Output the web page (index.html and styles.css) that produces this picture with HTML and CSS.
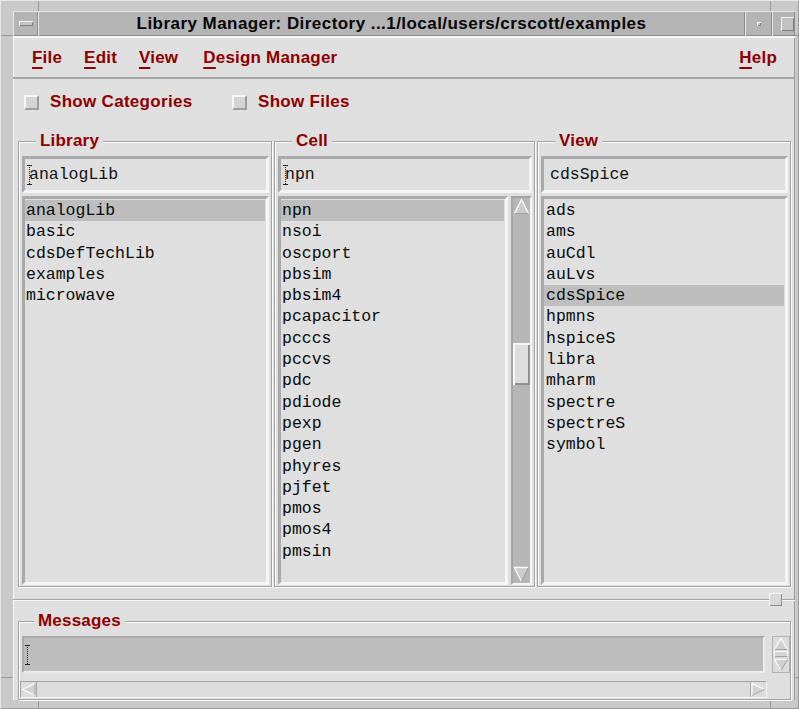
FILE: index.html
```html
<!DOCTYPE html>
<html>
<head>
<meta charset="utf-8">
<title>Library Manager</title>
<link rel="stylesheet" href="styles.css">
</head>
<body>
<div class="wm">
  <div class="titlebar">
    <div class="wm-btn wm-menu"><span class="wm-bar"></span></div>
    <div class="wm-title">Library Manager: Directory ...1/local/users/crscott/examples</div>
    <div class="wm-btn wm-min"><span class="wm-dot"></span></div>
    <div class="wm-btn wm-max"><span class="wm-square"></span></div>
  </div>

  <div class="client">
    <nav class="menubar">
      <span class="menu"><u>F</u>ile</span>
      <span class="menu"><u>E</u>dit</span>
      <span class="menu menu-view"><u>V</u>iew</span>
      <span class="menu"><u>D</u>esign Manager</span>
      <span class="menu help"><u>H</u>elp</span>
    </nav>

    <div class="options">
      <label class="toggle"><span class="check"></span>Show Categories</label>
      <label class="toggle"><span class="check"></span>Show Files</label>
    </div>

    <div class="browser">
      <fieldset class="group">
        <legend>Library</legend>
        <div class="field"><span class="ibeam"></span>analogLib</div>
        <div class="list-row">
          <div class="listbox">
            <ul class="items">
              <li class="sel">analogLib</li>
              <li>basic</li>
              <li>cdsDefTechLib</li>
              <li>examples</li>
              <li>microwave</li>
            </ul>
          </div>
        </div>
      </fieldset>

      <fieldset class="group">
        <legend>Cell</legend>
        <div class="field"><span class="ibeam"></span>npn</div>
        <div class="list-row">
          <div class="listbox">
            <ul class="items">
              <li class="sel">npn</li>
              <li>nsoi</li>
              <li>oscport</li>
              <li>pbsim</li>
              <li>pbsim4</li>
              <li>pcapacitor</li>
              <li>pcccs</li>
              <li>pccvs</li>
              <li>pdc</li>
              <li>pdiode</li>
              <li>pexp</li>
              <li>pgen</li>
              <li>phyres</li>
              <li>pjfet</li>
              <li>pmos</li>
              <li>pmos4</li>
              <li>pmsin</li>
            </ul>
          </div>
          <div class="vscroll">
            <svg class="arrow" viewBox="0 0 17 17"><polygon points="8.5,1.5 15.5,15.5 1.5,15.5" fill="#cbcbcb"/><polyline points="1.5,15.5 8.5,1.5 15.5,15.5" fill="none" stroke="#f8f8f8" stroke-width="1.4"/><line x1="2" y1="15.5" x2="15" y2="15.5" stroke="#a0a0a0"/></svg>
            <div class="track"><div class="thumb"></div></div>
            <svg class="arrow" viewBox="0 0 17 17"><polygon points="1.5,1.5 15.5,1.5 8.5,15.5" fill="#cbcbcb"/><polyline points="15.5,1.5 1.5,1.5 8.5,15.5" fill="none" stroke="#f8f8f8" stroke-width="1.4"/><line x1="15.5" y1="1.5" x2="8.5" y2="15.5" stroke="#9a9a9a"/></svg>
          </div>
        </div>
      </fieldset>

      <fieldset class="group view">
        <legend>View</legend>
        <div class="field">cdsSpice</div>
        <div class="list-row">
          <div class="listbox">
            <ul class="items">
              <li>ads</li>
              <li>ams</li>
              <li>auCdl</li>
              <li>auLvs</li>
              <li class="sel">cdsSpice</li>
              <li>hpmns</li>
              <li>hspiceS</li>
              <li>libra</li>
              <li>mharm</li>
              <li>spectre</li>
              <li>spectreS</li>
              <li>symbol</li>
            </ul>
          </div>
        </div>
      </fieldset>
    </div>

    <div class="sash-row"><span class="sash"></span></div>

    <fieldset class="group messages">
      <legend>Messages</legend>
      <div class="msg-grid">
        <div class="msg-text"><span class="ibeam"></span></div>
        <svg class="msg-scroll" viewBox="0 0 18 37">
          <rect x="0.5" y="0.5" width="17" height="36" fill="#dcdcdc" stroke="#b2b2b2"/>
          <polygon points="9,2.5 15.5,13.5 2.5,13.5" fill="#d0d0d0"/>
          <polyline points="2.5,13.5 9,2.5 15.5,13.5" fill="none" stroke="#fafafa" stroke-width="1.2"/>
          <line x1="3" y1="13.5" x2="15" y2="13.5" stroke="#a2a2a2"/>
          <rect x="2.5" y="15.5" width="13" height="5" fill="#d4d4d4" stroke="#f6f6f6"/>
          <line x1="3" y1="20.5" x2="15.5" y2="20.5" stroke="#a0a0a0"/>
          <polygon points="2.5,23.5 15.5,23.5 9,34.5" fill="#d0d0d0"/>
          <polyline points="15.5,23.5 2.5,23.5 9,34.5" fill="none" stroke="#fafafa" stroke-width="1.2"/>
          <line x1="15.5" y1="23.5" x2="9" y2="34.5" stroke="#a2a2a2"/>
        </svg>
        <div class="hscroll">
          <svg class="harrow" viewBox="0 0 16 15"><polygon points="1.5,7.5 14,1.5 14,13.5" fill="#d2d2d2"/><polyline points="14,1.5 1.5,7.5 14,13.5" fill="none" stroke="#fafafa" stroke-width="1.2"/><line x1="14" y1="1.5" x2="14" y2="13.5" stroke="#a8a8a8"/><line x1="15.5" y1="0" x2="15.5" y2="15" stroke="#a8a8a8"/></svg>
          <div class="htrack"></div>
          <svg class="harrow" viewBox="0 0 16 15"><line x1="0.5" y1="0" x2="0.5" y2="15" stroke="#a8a8a8"/><polygon points="14.5,7.5 2,1.5 2,13.5" fill="#d2d2d2"/><polyline points="14.5,7.5 2,1.5 2,13.5" fill="none" stroke="#fafafa" stroke-width="1.2"/><line x1="2" y1="13.5" x2="14.5" y2="7.5" stroke="#a8a8a8"/></svg>
        </div>
      </div>
    </fieldset>
  </div>
</div>
</body>
</html>
```

FILE: styles.css
```css
* {
  box-sizing: border-box;
}

html,
body {
  margin: 0;
  padding: 0;
}

body {
  width: 799px;
  height: 709px;
  overflow: hidden;
  background: #c9c9c9;
  font-family: "Liberation Sans", Arial, sans-serif;
}

/* ---- window manager frame ---- */
.wm {
  width: 799px;
  height: 709px;
  display: flex;
  flex-direction: column;
  padding: 10px 3px 8px 12px;
  border: 1px solid;
  border-color: #e8e8e8 #9c9c9c #9c9c9c #e8e8e8;
  background-color: #c9c9c9;
  /* resize-corner marks on the frame */
  background-image:
    linear-gradient(#9a9a9a, #9a9a9a),
    linear-gradient(#9a9a9a, #9a9a9a),
    linear-gradient(#9a9a9a, #9a9a9a),
    linear-gradient(#9a9a9a, #9a9a9a),
    linear-gradient(#9a9a9a, #9a9a9a),
    linear-gradient(#9a9a9a, #9a9a9a),
    linear-gradient(#9a9a9a, #9a9a9a),
    linear-gradient(#9a9a9a, #9a9a9a);
  background-repeat: no-repeat;
  background-position:
    37px 0, 769px 0,
    37px 100%, 769px 100%,
    0 34px, 0 676px,
    100% 34px, 100% 676px;
  background-size:
    1px 10px, 1px 10px,
    1px 8px, 1px 8px,
    12px 1px, 12px 1px,
    3px 1px, 3px 1px;
}

.titlebar {
  flex: none;
  display: flex;
  height: 25px;
  background: #b4b4b4;
}

.wm-btn,
.wm-title {
  box-shadow: inset 1px 1px 0 #e6e6e6, inset -1px -1px 0 #8c8c8c;
}

.wm-menu {
  width: 25px;
  display: flex;
  align-items: center;
  justify-content: center;
}

.wm-bar {
  width: 14px;
  height: 5px;
  background: #c6c6c6;
  box-shadow: inset 1px 1px 0 #f4f4f4, inset -1px -1px 0 #808080;
}

.wm-title {
  flex: 1;
  text-align: center;
  font-weight: bold;
  font-size: 17px;
  line-height: 25px;
  color: #050505;
  letter-spacing: 0.45px;
  white-space: nowrap;
}

.wm-min {
  width: 27px;
  display: flex;
  align-items: center;
  justify-content: center;
}

.wm-dot {
  width: 4px;
  height: 4px;
  background: #c8c8c8;
  box-shadow: inset 1px 1px 0 #f2f2f2, inset -1px -1px 0 #7e7e7e;
}

.wm-max {
  width: 23px;
  display: flex;
  align-items: center;
  justify-content: flex-end;
  padding-right: 1px;
}

.wm-square {
  width: 13px;
  height: 14px;
  background: #c2c2c2;
  box-shadow: inset 1px 1px 0 #f2f2f2, inset -1px -1px 0 #7e7e7e;
}

/* ---- application client area ---- */
.client {
  flex: 1;
  display: flex;
  flex-direction: column;
  background: #dfdfdf;
  box-shadow: inset 1px 0 0 #f6f6f6, inset -1px 0 0 #9c9c9c;
}

.menubar {
  flex: none;
  height: 43px;
  display: flex;
  align-items: center;
  padding: 0 18px 0 19px;
  border-top: 2px solid #f6f6f6;
  border-bottom: 2px solid #a6a6a6;
}

.menu {
  font-weight: bold;
  font-size: 17px;
  color: #8e0000;
  letter-spacing: 0.2px;
  margin-right: 22px;
  white-space: nowrap;
}

.menu u {
  text-decoration-thickness: 2px;
  text-underline-offset: 4px;
}

.menu-view {
  margin-right: 25px;
}

.menu.help {
  margin-left: auto;
  margin-right: 0;
}

.options {
  flex: none;
  height: 46px;
  display: flex;
  align-items: center;
  padding-left: 11px;
}

.toggle {
  width: 208px;
  display: flex;
  align-items: center;
  font-weight: bold;
  font-size: 17px;
  color: #8e0000;
  letter-spacing: 0.3px;
  white-space: nowrap;
}

.check {
  width: 15px;
  height: 15px;
  margin-right: 11px;
  background: #d4d4d4;
  border: 2px solid;
  border-color: #f8f8f8 #9c9c9c #9c9c9c #f8f8f8;
}

/* ---- library / cell / view columns ---- */
.browser {
  flex: none;
  height: 456px;
  margin: 6px 4px 0 5px;
  display: grid;
  grid-template-columns: 254px 261px 254px;
  column-gap: 2px;
}

.group {
  margin: 0;
  padding: 0 2px 1px 3px;
  min-width: 0;
  border: 1px solid #a4a4a4;
  box-shadow: inset 1px 1px 0 #fbfbfb, 1px 1px 0 #fbfbfb;
}

.group legend {
  margin-left: 14px;
  padding: 0 4px;
  font-weight: bold;
  font-size: 17px;
  line-height: 20px;
  letter-spacing: 0.2px;
  color: #8e0000;
  background: #dfdfdf;
}

.view .field {
  padding-left: 6px;
}

.view .items li {
  padding-left: 2px;
}

.field {
  margin-top: 5px;
  height: 37px;
  display: flex;
  align-items: center;
  padding-left: 4px;
  border: 3px solid;
  border-color: #a9a9a9 #f6f6f6 #f6f6f6 #a9a9a9;
  font-family: "Liberation Mono", "Courier New", monospace;
  font-size: 16.5px;
  color: #111;
  white-space: nowrap;
}

.ibeam {
  flex: none;
  display: inline-block;
  width: 5px;
  height: 20px;
  margin: 0 -3px 0 -2px;
  background:
    linear-gradient(#222, #222) 0 0 / 5px 1px no-repeat,
    linear-gradient(#222, #222) 0 100% / 5px 1px no-repeat,
    repeating-linear-gradient(#222 0 1px, transparent 1px 2px) 2px 0 / 1px 100% no-repeat;
}

.list-row {
  margin-top: 3px;
  height: 389px;
  display: flex;
}

.listbox {
  flex: 1;
  min-width: 0;
  overflow: hidden;
  border: 3px solid;
  border-color: #a9a9a9 #f6f6f6 #f6f6f6 #a9a9a9;
}

.items {
  list-style: none;
  margin: 0;
  padding: 1px 1px 0 0;
  font-family: "Liberation Mono", "Courier New", monospace;
  font-size: 16.5px;
  line-height: 21.3px;
  color: #0a0a0a;
}

.items li {
  padding-left: 1px;
  white-space: nowrap;
}

.items li.sel {
  background: #bebebe;
}

.vscroll {
  flex: none;
  width: 21px;
  margin-left: 3px;
  display: flex;
  flex-direction: column;
  background: #b6b6b6;
  border: 2px solid;
  border-color: #a4a4a4 #f6f6f6 #f6f6f6 #a4a4a4;
}

.vscroll .arrow {
  display: block;
  flex: none;
  width: 17px;
  height: 17px;
}

.vscroll .track {
  flex: 1;
  padding-top: 128px;
}

.thumb {
  height: 42px;
  background: #dedede;
  box-shadow: inset 2px 2px 0 #f8f8f8, inset -2px -2px 0 #8e8e8e;
}

/* ---- pane sash ---- */
.sash-row {
  flex: none;
  height: 24px;
  display: flex;
  align-items: center;
  justify-content: flex-end;
  padding-right: 13px;
  background:
    linear-gradient(#a4a4a4, #a4a4a4) 0 12px / 100% 1px no-repeat,
    linear-gradient(#f8f8f8, #f8f8f8) 0 13px / 100% 1px no-repeat;
}

.sash {
  width: 13px;
  height: 13px;
  background: #d8d8d8;
  box-shadow: inset 1px 1px 0 #fafafa, inset -1px -1px 0 #8c8c8c;
}

/* ---- messages ---- */
.messages {
  flex: none;
  height: 89px;
  margin: 0 4px 0 5px;
  padding: 0 0 1px 1px;
}

.msg-grid {
  margin-top: 5px;
  display: grid;
  grid-template-columns: 747px 18px;
  grid-template-rows: 37px 17px;
  column-gap: 5px;
  row-gap: 8px;
}

.msg-text {
  margin: 0 2px;
  display: flex;
  align-items: center;
  padding-left: 3px;
  background: #bdbdbd;
  border: 2px solid;
  border-color: #a9a9a9 #ececec #ececec #a9a9a9;
}

.msg-scroll {
  display: block;
  width: 18px;
  height: 37px;
}

.hscroll {
  display: flex;
  background: #dcdcdc;
  border: 1px solid;
  border-color: #a4a4a4 #f6f6f6 #f6f6f6 #a4a4a4;
}

.harrow {
  display: block;
  flex: none;
  width: 16px;
  height: 15px;
}

.htrack {
  flex: 1;
}
```
